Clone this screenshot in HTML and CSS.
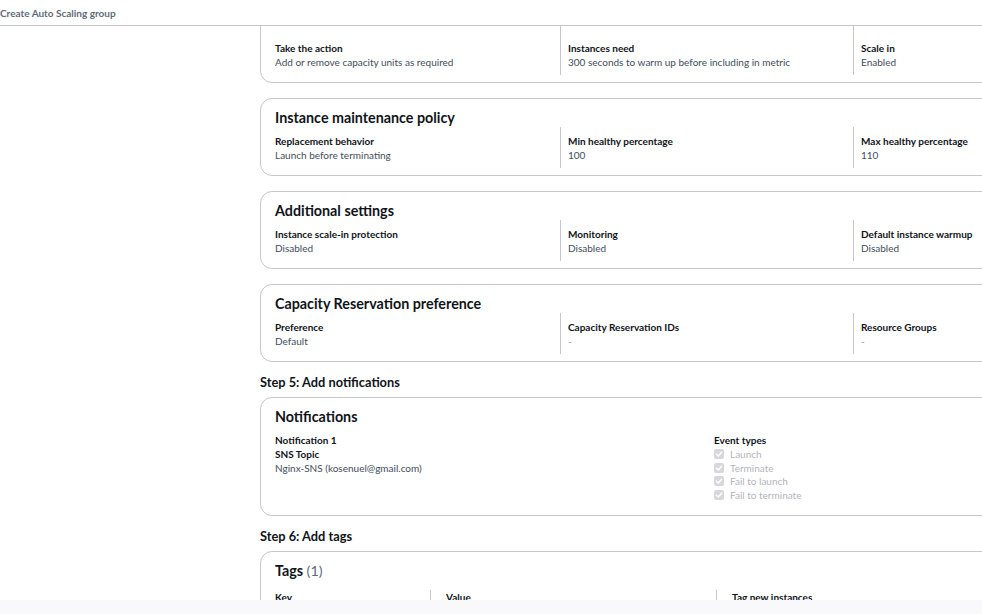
FILE: index.html
```html
<!DOCTYPE html>
<html lang="en">
<head>
<meta charset="utf-8">
<title>Create Auto Scaling group</title>
<link rel="stylesheet" href="styles.css">
</head>
<body>
<header class="topbar">
  <span class="crumb">Create Auto Scaling group</span>
</header>

<main class="review">
  <section class="card card-first">
    <div class="cols three">
      <div class="col"><div class="label">Take the action</div><div class="value">Add or remove capacity units as required</div></div>
      <div class="col"><div class="label">Instances need</div><div class="value">300 seconds to warm up before including in metric</div></div>
      <div class="col"><div class="label">Scale in</div><div class="value">Enabled</div></div>
    </div>
  </section>

  <section class="card">
    <h2 class="card-title">Instance maintenance policy</h2>
    <div class="cols three">
      <div class="col"><div class="label">Replacement behavior</div><div class="value">Launch before terminating</div></div>
      <div class="col"><div class="label">Min healthy percentage</div><div class="value">100</div></div>
      <div class="col"><div class="label">Max healthy percentage</div><div class="value">110</div></div>
    </div>
  </section>

  <section class="card">
    <h2 class="card-title">Additional settings</h2>
    <div class="cols three">
      <div class="col"><div class="label">Instance scale-in protection</div><div class="value">Disabled</div></div>
      <div class="col"><div class="label">Monitoring</div><div class="value">Disabled</div></div>
      <div class="col"><div class="label">Default instance warmup</div><div class="value">Disabled</div></div>
    </div>
  </section>

  <section class="card">
    <h2 class="card-title">Capacity Reservation preference</h2>
    <div class="cols three">
      <div class="col"><div class="label">Preference</div><div class="value">Default</div></div>
      <div class="col"><div class="label">Capacity Reservation IDs</div><div class="value muted">-</div></div>
      <div class="col"><div class="label">Resource Groups</div><div class="value muted">-</div></div>
    </div>
  </section>

  <h3 class="step">Step 5: Add notifications</h3>
  <section class="card">
    <h2 class="card-title">Notifications</h2>
    <div class="cols two">
      <div class="col plain">
        <div class="label">Notification 1</div>
        <div class="label">SNS Topic</div>
        <div class="value">Nginx-SNS (kosenuel@gmail.com)</div>
      </div>
      <div class="col plain">
        <div class="label">Event types</div>
        <ul class="checks">
          <li><span class="box"><svg viewBox="0 0 10 10"><path d="M2.4 5.2 L4.3 7 L7.6 3.2" fill="none" stroke="#fff" stroke-width="1.4" stroke-linecap="round" stroke-linejoin="round"/></svg></span>Launch</li>
          <li><span class="box"><svg viewBox="0 0 10 10"><path d="M2.4 5.2 L4.3 7 L7.6 3.2" fill="none" stroke="#fff" stroke-width="1.4" stroke-linecap="round" stroke-linejoin="round"/></svg></span>Terminate</li>
          <li><span class="box"><svg viewBox="0 0 10 10"><path d="M2.4 5.2 L4.3 7 L7.6 3.2" fill="none" stroke="#fff" stroke-width="1.4" stroke-linecap="round" stroke-linejoin="round"/></svg></span>Fail to launch</li>
          <li><span class="box"><svg viewBox="0 0 10 10"><path d="M2.4 5.2 L4.3 7 L7.6 3.2" fill="none" stroke="#fff" stroke-width="1.4" stroke-linecap="round" stroke-linejoin="round"/></svg></span>Fail to terminate</li>
        </ul>
      </div>
    </div>
  </section>

  <h3 class="step">Step 6: Add tags</h3>
  <section class="card">
    <h2 class="card-title">Tags <span class="count">(1)</span></h2>
    <div class="tag-table">
      <div class="th">Key</div>
      <div class="th">Value</div>
      <div class="th">Tag new instances</div>
      <div class="td">Name</div>
      <div class="td">Nginx-ASG</div>
      <div class="td">Yes</div>
    </div>
  </section>
</main>

<footer class="bottombar"></footer>
</body>
</html>
```

FILE: styles.css
```css
html, body {
  margin: 0;
  padding: 0;
  overflow: hidden;
  background: #ffffff;
  height: 100%;
}

body {
  font-family: "Lato", "Open Sans", "Liberation Sans", sans-serif;
  color: #0f141a;
  font-size: 10px;
  line-height: 14px;
}

.topbar {
  position: fixed;
  top: 0;
  left: 0;
  right: 0;
  height: 25px;
  background: #ffffff;
  border-bottom: 1px solid #c6c6cd;
  z-index: 10;
  display: flex;
  align-items: center;
}

.crumb {
  font-weight: 700;
  font-size: 10px;
  color: #5f6b7a;
  padding-top: 1px;
}

.bottombar {
  position: fixed;
  left: 0;
  right: 0;
  bottom: 0;
  height: 14px;
  background: #f9f9fc;
  z-index: 10;
}

.review {
  margin-left: 260px;
  width: 920px;
  display: flex;
  flex-direction: column;
}

.card {
  border: 1px solid #c6c6cd;
  border-radius: 12px;
  padding: 10px 14px 7px 14px;
  margin-bottom: 15px;
  background: #ffffff;
}

.card-first {
  margin-top: -10px;
}

.card-first .col {
  padding-top: 40px;
}

.card-title {
  margin: 0;
  font-size: 14.3px;
  line-height: 18px;
  font-weight: 700;
  color: #0f141a;
}

.count {
  font-weight: 400;
  color: #5f6b7a;
}

.cols {
  display: grid;
}

.cols.three {
  grid-template-columns: 285px 293px 293px;
}

.cols.two {
  grid-template-columns: 439px 400px;
}

.col {
  padding: 7px 7px 6px 0;
  display: flex;
  flex-direction: column;
}

.cols.three .col + .col {
  border-left: 1px solid #c6c6cd;
  padding-left: 7px;
}

.label {
  font-weight: 700;
  color: #0f141a;
}

.value {
  color: #414d5c;
}

.value.muted {
  color: #8d99a8;
}

.step {
  margin: -3px 0 7px 0;
  font-size: 12.8px;
  line-height: 16px;
  font-weight: 700;
  color: #0f141a;
}

.checks {
  list-style: none;
  margin: 0;
  padding: 0;
}

.checks li {
  display: flex;
  align-items: center;
  height: 13.7px;
  color: #b4b4bb;
}

.box {
  width: 10px;
  height: 10px;
  border-radius: 2px;
  background: #d7d7dc;
  margin-right: 6px;
  display: flex;
}

.box svg {
  width: 10px;
  height: 10px;
}

.tag-table {
  display: grid;
  grid-template-columns: 155px 286px 300px;
  margin-top: 10px;
}

.th {
  font-weight: 700;
  color: #0f141a;
  padding: 0 15px;
}

.td {
  color: #414d5c;
  padding: 4px 15px;
}

.th:nth-child(3n+1),
.td:nth-child(3n+1) {
  padding-left: 0;
}

.th:nth-child(3n+2),
.th:nth-child(3n) {
  border-left: 1px solid #c6c6cd;
}
```
